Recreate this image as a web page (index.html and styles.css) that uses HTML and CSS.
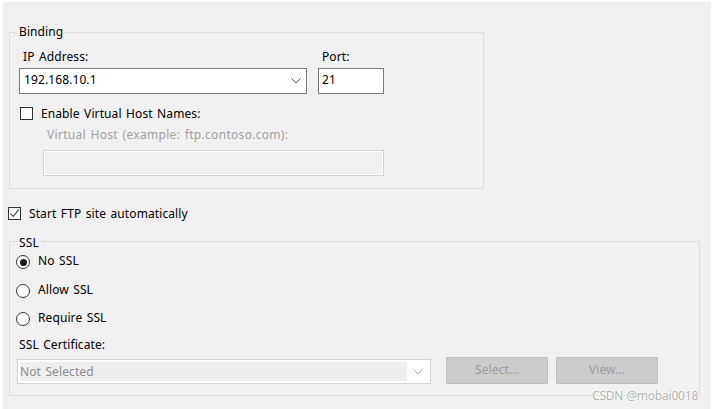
FILE: index.html
```html
<!DOCTYPE html>
<html>
<head>
<meta charset="utf-8">
<link rel="stylesheet" href="styles.css">
</head>
<body>
<div class="panel">
  <div class="group binding">
    <div class="legend">Binding</div>
    <div class="row-top">
      <div class="col">
        <div class="lbl">IP Address:</div>
        <div class="combo ip">
          <span class="val">192.168.10.1</span>
          <svg class="chev" width="10" height="6" viewBox="0 0 10 6"><polyline points="0.5,0.5 5,5 9.5,0.5" fill="none" stroke="#606060" stroke-width="1"/></svg>
        </div>
      </div>
      <div class="col">
        <div class="lbl">Port:</div>
        <div class="tbox port">21</div>
      </div>
    </div>
    <div class="check vhost"><span class="box"></span><span>Enable Virtual Host Names:</span></div>
    <div class="lbl dis vlabel">Virtual Host (example: ftp.contoso.com):</div>
    <div class="tbox disabled vinput"></div>
  </div>

  <div class="check start">
    <span class="box"><svg width="11" height="11" viewBox="0 0 11 11"><polyline points="1.5,5.5 4.2,8.5 9.8,1.5" fill="none" stroke="#333" stroke-width="1.1"/></svg></span>
    <span>Start FTP site automatically</span>
  </div>

  <div class="group ssl">
    <div class="legend">SSL</div>
    <div class="radio first"><span class="rb on"></span><span>No SSL</span></div>
    <div class="radio second"><span class="rb"></span><span>Allow SSL</span></div>
    <div class="radio third"><span class="rb"></span><span>Require SSL</span></div>
    <div class="lbl cert">SSL Certificate:</div>
    <div class="cert-row">
      <div class="combo disabled-combo">
        <span class="dval">Not Selected</span>
        <span class="dbtn"><svg width="10" height="6" viewBox="0 0 10 6"><polyline points="0.5,0.5 5,5 9.5,0.5" fill="none" stroke="#ababab" stroke-width="1"/></svg></span>
      </div>
      <div class="btn sel">Select...</div>
      <div class="btn view">View...</div>
    </div>
  </div>
  <div class="wm">CSDN @mobai0018</div>
</div>
</body>
</html>
```

FILE: styles.css
```css
html, body {
  margin: 0;
  padding: 0;
  background: #ffffff;
}
body {
  font-family: "Noto Sans", "Open Sans", "Liberation Sans", sans-serif;
  font-size: 12px;
  line-height: 18px;
  letter-spacing: 0.1px;
  word-spacing: 1.2px;
  color: #000;
}
.panel {
  position: relative;
  margin: 2px 6px 0 3px;
  height: 407px;
  background: #f0f0f0;
  overflow: hidden;
}
.group {
  box-sizing: border-box;
  border: 1px solid #dcdcdc;
  margin-left: 6px;
}
.legend {
  display: table;
  background: #f0f0f0;
  padding: 0 2px;
  height: 18px;
  white-space: nowrap;
}
.binding {
  margin-top: 30px;
  width: 475px;
  height: 157px;
  padding-left: 9px;
}
.binding .legend {
  margin-top: -10px;
  margin-left: -2px;
}
.row-top {
  display: flex;
  gap: 11px;
  margin-top: 7px;
}
.lbl {
  height: 18px;
  padding-left: 4px;
  white-space: nowrap;
}
.dis { color: #a0a0a0; letter-spacing: 0.3px; }
.combo {
  box-sizing: border-box;
  display: flex;
  align-items: center;
  height: 26px;
  margin-top: 2px;
  border: 1px solid #7a7a7a;
  background: #fff;
}
.combo.ip {
  width: 288px;
  padding: 0 5px 3px 4px;
  justify-content: space-between;
}
.combo.ip .chev { margin-top: 3px; }
.tbox {
  box-sizing: border-box;
  height: 26px;
  margin-top: 2px;
  border: 1px solid #7a7a7a;
  background: #fff;
  padding: 2px 0 0 3px;
}
.tbox.port { width: 66px; }
.check {
  display: flex;
  align-items: flex-start;
  height: 18px;
  white-space: nowrap;
}
.box {
  box-sizing: border-box;
  width: 13px;
  height: 13px;
  margin-top: 2px;
  margin-right: 8px;
  border: 1px solid #333333;
  background: #fff;
  display: flex;
  align-items: center;
  justify-content: center;
  flex: none;
}
.box svg { display: block; }
.vhost {
  margin-top: 11px;
  margin-left: 1px;
}
.vlabel {
  margin-top: 3px;
  margin-left: 24px;
}
.tbox.disabled {
  border: 1px solid #d4d4d4;
  box-shadow: inset 0 0 0 1px #ffffff;
  background: #f0f0f0;
}
.vinput {
  width: 341px;
  margin-top: 6px;
  margin-left: 24px;
}
.start {
  margin-top: 16px;
  margin-left: 5px;
}
.ssl {
  margin-top: 18px;
  width: 691px;
  height: 155px;
  padding-left: 7px;
}
.ssl .legend {
  margin-top: -8px;
}
.radio {
  display: flex;
  align-items: flex-start;
  height: 18px;
  margin-left: -1px;
  white-space: nowrap;
}
.rb {
  box-sizing: border-box;
  width: 14px;
  height: 14px;
  margin-top: 3px;
  margin-right: 8px;
  border: 1px solid #333333;
  border-radius: 50%;
  background: #fff;
  display: flex;
  align-items: center;
  justify-content: center;
  flex: none;
}
.rb.on::after {
  content: "";
  width: 7px;
  height: 7px;
  border-radius: 50%;
  background: #1a1a1a;
}
.first { margin-top: 0; }
.second { margin-top: 11px; }
.third { margin-top: 10px; }
.cert {
  margin-top: 9px;
  padding-left: 2px;
}
.cert-row {
  display: flex;
  align-items: flex-start;
  margin-top: 3px;
}
.disabled-combo {
  width: 414px;
  height: 25px;
  margin-top: 2px;
  border: 1px solid #d4d4d4;
  padding: 2px;
  align-items: stretch;
  background: #fff;
}
.dval {
  flex: 1;
  background: #efefef;
  color: #8c8c8c;
  padding: 0;
  line-height: 19px;
}
.dbtn {
  width: 21px;
  display: flex;
  align-items: center;
  justify-content: center;
  padding-top: 1px;
}
.btn {
  box-sizing: border-box;
  width: 102px;
  height: 27px;
  background: #cccccc;
  border: 1px solid #bfbfbf;
  color: #9b9b9b;
  text-align: center;
  padding-top: 3px;
}
.sel { margin-left: 15px; }
.view { margin-left: 8px; }
.wm {
  position: absolute;
  left: 589px;
  top: 386px;
  font-size: 12px;
  line-height: 16px;
  color: #b4b4b4;
  text-shadow: 0 0 2px #ffffff, 0 0 2px #ffffff, 0 0 3px #ffffff;
  letter-spacing: -0.2px;
  word-spacing: 0;
  white-space: nowrap;
}
```
